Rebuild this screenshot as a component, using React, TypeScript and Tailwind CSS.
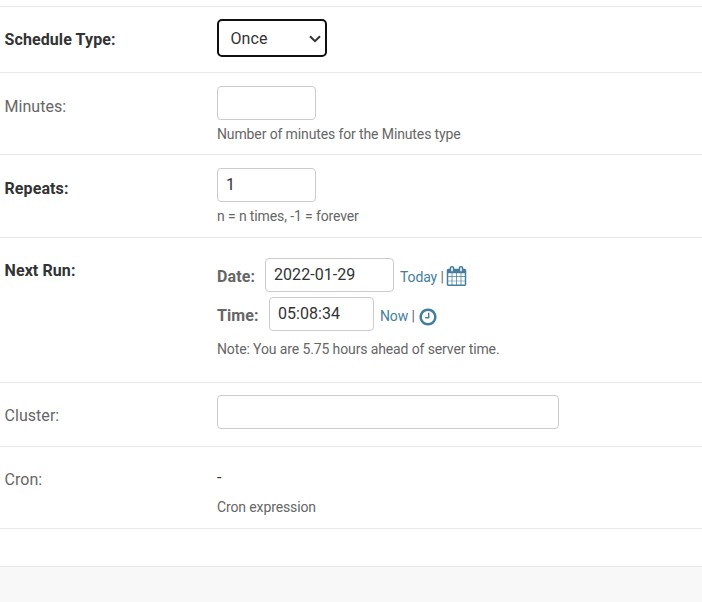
import React from 'react';

const label = 'w-[212px] shrink-0 pl-[4.5px] text-[16px] leading-[20px]';
const help = 'text-[14px] leading-[20px] tracking-[-0.12px] text-[#666]';
const input = 'box-border h-[34px] rounded-[4px] border border-[#ccc] bg-white px-[8px] pb-[2px] text-[16px] tracking-[0.05px] text-[#333] outline-none';
const link = 'ml-[6px] mt-[4px] whitespace-pre text-[14px] tracking-[-0.12px] text-[#666]';

function Row({ name, bold, height, top, children }: { name: string; bold?: boolean; height: string; top: string; children: React.ReactNode }) {
  return (
    <div className={`flex border-b border-[#e8e8e8] ${height}`}>
      <div className={`${label} ${top} ${bold ? 'font-bold tracking-[0.1px] text-[#333]' : 'tracking-[0.05px] text-[#666]'}`}>{name}</div>
      <div className="pl-[5px]">{children}</div>
    </div>
  );
}

function CalendarIcon() {
  return (
    <svg className="ml-[-0.8px] mt-[2px] h-[20px] w-[21px]" viewBox="0 0 1792 1792" preserveAspectRatio="none" fill="#447e9b">
      <path d="M192 1664h288v-288h-288v288zm352 0h320v-288h-320v288zm-352-352h288v-320h-288v320zm352 0h320v-320h-320v320zm-352-384h288v-288h-288v288zm736 736h320v-288h-320v288zm-384-736h320v-288h-320v288zm768 736h288v-288h-288v288zm-384-352h320v-320h-320v320zm-352-864v-288q0-13-9.5-22.5t-22.5-9.5h-64q-13 0-22.5 9.5t-9.5 22.5v288q0 13 9.5 22.5t22.5 9.5h64q13 0 22.5-9.5t9.5-22.5zm736 864h288v-320h-288v320zm-384-384h320v-288h-320v288zm384 0h288v-288h-288v288zm32-480v-288q0-13-9.5-22.5t-22.5-9.5h-64q-13 0-22.5 9.5t-9.5 22.5v288q0 13 9.5 22.5t22.5 9.5h64q13 0 22.5-9.5t9.5-22.5zm384-64v1280q0 52-38 90t-90 38h-1408q-52 0-90-38t-38-90v-1280q0-52 38-90t90-38h128v-96q0-66 47-113t113-47h64q66 0 113 47t47 113v96h384v-96q0-66 47-113t113-47h64q66 0 113 47t47 113v96h128q52 0 90 38t38 90z" />
    </svg>
  );
}

function ClockIcon() {
  return (
    <svg className="ml-[-0.5px] mt-[6px] h-[20px] w-[20px]" viewBox="0 0 1792 1792" fill="#447e9b">
      <path d="M1024 544v448q0 14-9 23t-23 9h-320q-14 0-23-9t-9-23v-64q0-14 9-23t23-9h224v-352q0-14 9-23t23-9h64q14 0 23 9t9 23zm416 352q0-148-73-273t-198-198-273-73-273 73-198 198-73 273 73 273 198 198 273 73 273-73 198-198 73-273zm224 0q0 209-103 385.5t-279.5 279.5-385.5 103-385.5-103-279.5-279.5-103-385.5 103-385.5 279.5-279.5 385.5-103 385.5 103 279.5 279.5 103 385.5z" />
    </svg>
  );
}

export default function App() {
  return (
    <div className="h-[602px] w-[702px] overflow-hidden bg-white font-[Roboto,sans-serif] text-[#333]">
      <div className="h-[7px] border-b border-[#e8e8e8]" />
      <Row name="Schedule Type:" bold height="h-[66px]" top="pt-[23px]">
        <div className="mt-[12px] flex h-[38px] w-[110px] items-center justify-between rounded-[5px] border-2 border-[#101010] pl-[11.5px] pr-[4px] text-[16px]">
          <span className="mt-[2px] tracking-[0.1px]">Once</span>
          <svg className="mt-[1px]" width="12" height="8" viewBox="0 0 12 8" fill="none" stroke="#333" strokeWidth="2"><path d="M1 1.2 6 6.2 11 1.2" /></svg>
        </div>
      </Row>
      <Row name="Minutes:" height="h-[82px]" top="pt-[24px]">
        <input className={`${input} mt-[13px] block w-[99px]`} />
        <div className={`${help} mt-[4px]`}>Number of minutes for the Minutes type</div>
      </Row>
      <Row name="Repeats:" bold height="h-[83px]" top="pt-[24px]">
        <input className={`${input} mt-[13px] block w-[99px]`} defaultValue="1" />
        <div className={`${help} mt-[4px]`}>n = n times, -1 = forever</div>
      </Row>
      <Row name="Next Run:" bold height="h-[145px]" top="pt-[23px]">
        <div className="mt-[20px] flex h-[34px] items-center">
          <b className="mt-[4px] w-[48px] text-[16px] tracking-[0.1px] text-[#666]">Date:</b>
          <input className={`${input} w-[129px]`} defaultValue="2022-01-29" />
          <span className={link}><span className="text-[#447e9b]">Today</span> | </span>
          <CalendarIcon />
        </div>
        <div className="mt-[5px] flex h-[34px] items-center">
          <b className="mt-[4px] w-[52px] text-[16px] tracking-[0.1px] text-[#666]">Time:</b>
          <input className={`${input} w-[105px]`} defaultValue="05:08:34" />
          <span className={link}><span className="text-[#447e9b]">Now</span> | </span>
          <ClockIcon />
        </div>
        <div className={`${help} mt-[8px]`}>Note: You are 5.75 hours ahead of server time.</div>
      </Row>
      <Row name="Cluster:" height="h-[64px]" top="pt-[23px]">
        <input className={`${input} mt-[12px] block w-[342px]`} />
      </Row>
      <Row name="Cron:" height="h-[82px]" top="pt-[23px]">
        <div className="mt-[21px] text-[16px] leading-[20px]">-</div>
        <div className={`${help} mt-[9px]`}>Cron expression</div>
      </Row>
      <div className="mt-[37px] h-[36px] border-t border-[#e8e8e8] bg-[#f8f8f8]" />
    </div>
  );
}
